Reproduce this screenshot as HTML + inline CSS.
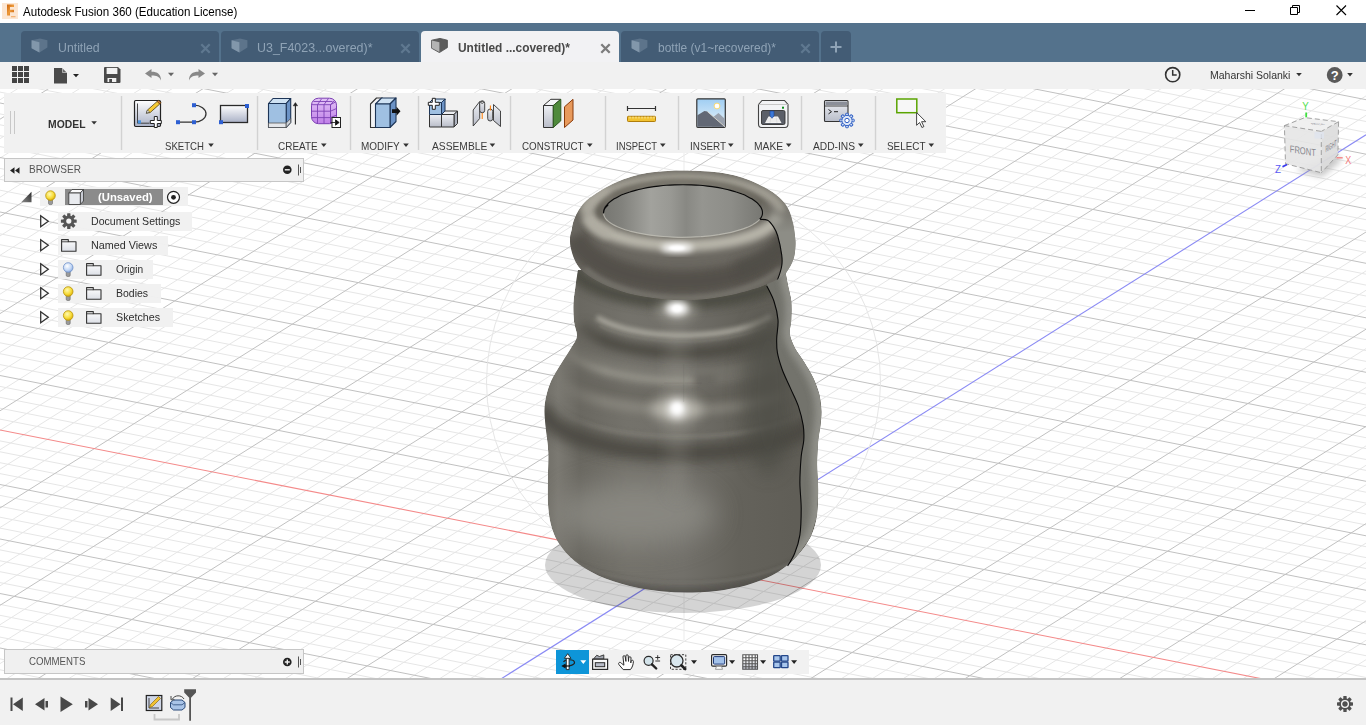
<!DOCTYPE html>
<html lang="en">
<head>
<meta charset="utf-8">
<title>Autodesk Fusion 360 (Education License)</title>
<style>
*{box-sizing:border-box;margin:0;padding:0}
html,body{width:1366px;height:725px;overflow:hidden;background:#fff;font-family:"Liberation Sans",Arial,sans-serif;}
.abs{position:absolute}
#titlebar{position:absolute;left:0;top:0;width:1366px;height:23px;background:#fff}
#titlebar .ttl{position:absolute;left:23.5px;top:5px;font-size:12.4px;color:#000;white-space:nowrap;transform:scaleX(0.936);transform-origin:0 0}
#tabstrip{position:absolute;left:0;top:23px;width:1366px;height:39px;background:#54728c}
.tab{position:absolute;top:8px;height:31px;width:198px;background:#435c75;border-radius:4px 4px 0 0;color:#8fa3b6;font-size:12.5px;white-space:nowrap}
.tab .lbl{position:absolute;left:36.500px;top:10px}
.tab.active{background:#f2f2f4;color:#484848;font-weight:bold}
.tab svg{position:absolute}
#qat{position:absolute;left:0;top:62px;width:1366px;height:27px;background:#f1f1f1}
#canvas{position:absolute;left:0;top:89px;width:1366px;height:590px;background:#fff;overflow:hidden}
#toolbar{position:absolute;left:4px;top:93px;width:942px;height:59.5px;background:#f1f1f1}
.tsep{position:absolute;top:3px;width:1px;height:54px;background:#d4d4d4}
.tlbl{position:absolute;top:47px;font-size:11px;color:#3a3a3a;white-space:nowrap;letter-spacing:0px}
.dd{display:inline-block;width:0;height:0;border-left:3px solid transparent;border-right:3px solid transparent;border-top:4px solid #333;vertical-align:middle;margin-left:3px;position:relative;top:-1px}
#browser{position:absolute;left:4px;top:157.5px;width:300px;height:24px;background:#f0f0f0;border:1px solid #c6c6c6}
.row{position:absolute;height:19px;background:rgba(241,241,241,0.97);font-size:11px;color:#2a2a2a;white-space:nowrap}
.row span{position:absolute;top:3px}
#comments{position:absolute;left:4px;top:648.5px;width:300px;height:25px;background:#f0f0f0;border:1px solid #c6c6c6}
#navbar{position:absolute;left:556px;top:650px;width:253px;height:24px;background:#f1f1f1}
#bottomline{position:absolute;left:0;top:678px;width:1366px;height:2px;background:#c4c4c4}
#timeline{position:absolute;left:0;top:680px;width:1366px;height:45px;background:#f1f1f1}
svg{display:block}
</style>
</head>
<body>
<div id="titlebar">
<svg class="abs" style="left:2px;top:3px" width="16" height="16" viewBox="0 0 16 16"><defs><linearGradient id="gF" x1="0" y1="0" x2="1" y2="1"><stop offset="0" stop-color="#c9620c"/><stop offset="0.500" stop-color="#ee9a3a"/><stop offset="1" stop-color="#c9620c"/></linearGradient></defs><rect width="16" height="16" fill="#fce6d2"/><path d="M5 1.500h7v2.600H8v2.700h4v2.400H8v3.200H5z" fill="url(#gF)"/><rect x="9" y="13" width="4.500" height="1.300" fill="#f0a860" opacity="0.800"/></svg>
<span style="position:absolute;left:22.9px;top:5.5px;font-size:12.4px;line-height:1;font-weight:normal;color:#000;white-space:nowrap;transform:scaleX(0.9343);transform-origin:0 0">Autodesk Fusion 360 (Education License)</span>

<svg class="abs" style="left:1240px;top:0" width="126" height="23" viewBox="1240 0 126 23"><path d="M1245 10.500h10" stroke="#000" stroke-width="1" fill="none"/><path d="M1290.500 7.500h7v7h-7zM1292.500 7.500v-2h7v7h-2" stroke="#000" stroke-width="1" fill="none"/><path d="M1336.500 5.500l9.500 9.500M1346 5.500l-9.500 9.500" stroke="#000" stroke-width="1.100" fill="none"/></svg>
</div>
<div id="tabstrip">
<div class="tab" style="left:21px"><svg style="left:10px;top:6.500px" width="17" height="15" viewBox="0 0 17 15"><path d="M0.600 2.200l8.400-1.800 7.400 1.800v7.400l-8 5-7.800-4.400z" fill="#5d748b"/><path d="M0.600 2.200l7.800 2v10.400l-7.800-4.400z" fill="#8297ab"/></svg><span style="position:absolute;left:36.6px;top:10.5px;font-size:12.5px;line-height:1;font-weight:normal;color:#8fa3b6;white-space:nowrap;transform:scaleX(0.9837);transform-origin:0 0">Untitled</span>
<svg style="left:178.500px;top:11.500px" width="11" height="11" viewBox="0 0 11 11"><path d="M1.300 1.300l8.400 8.400M9.700 1.300l-8.400 8.400" stroke="#5f7890" stroke-width="2.300" fill="none"/></svg></div>
<div class="tab" style="left:221px"><svg style="left:10px;top:6.500px" width="17" height="15" viewBox="0 0 17 15"><path d="M0.600 2.200l8.400-1.800 7.400 1.800v7.400l-8 5-7.800-4.400z" fill="#5d748b"/><path d="M0.600 2.200l7.800 2v10.400l-7.800-4.400z" fill="#8297ab"/></svg><span style="position:absolute;left:36px;top:10.5px;font-size:12.5px;line-height:1;font-weight:normal;color:#8fa3b6;white-space:nowrap;transform:scaleX(0.9953);transform-origin:0 0">U3_F4023...overed)*</span>
<svg style="left:178.500px;top:11.500px" width="11" height="11" viewBox="0 0 11 11"><path d="M1.300 1.300l8.400 8.400M9.700 1.300l-8.400 8.400" stroke="#5f7890" stroke-width="2.300" fill="none"/></svg></div>
<div class="tab active" style="left:421px"><svg style="left:10px;top:6.500px" width="17" height="15" viewBox="0 0 17 15"><path d="M0.600 2.200l8.400-1.800 7.400 1.800v7.400l-8 5-7.800-4.400z" fill="#5c5c5c" stroke="#4a4a4a" stroke-width="0.800" stroke-linejoin="round"/><path d="M0.900 2.500l7.500 1.800v9.800l-7.500-4.100z" fill="#b4b4b4"/></svg><span style="position:absolute;left:36.6px;top:10.5px;font-size:12.5px;line-height:1;font-weight:bold;color:#484848;white-space:nowrap;transform:scaleX(0.9532);transform-origin:0 0">Untitled ...covered)*</span>
<svg style="left:178.500px;top:11.500px" width="11" height="11" viewBox="0 0 11 11"><path d="M1.300 1.300l8.400 8.400M9.700 1.300l-8.400 8.400" stroke="#7c7c7c" stroke-width="2.300" fill="none"/></svg></div>
<div class="tab" style="left:621px"><svg style="left:10px;top:6.500px" width="17" height="15" viewBox="0 0 17 15"><path d="M0.600 2.200l8.400-1.800 7.400 1.800v7.400l-8 5-7.800-4.400z" fill="#5d748b"/><path d="M0.600 2.200l7.800 2v10.400l-7.800-4.400z" fill="#8297ab"/></svg><span style="position:absolute;left:36.5px;top:10.5px;font-size:12.5px;line-height:1;font-weight:normal;color:#8fa3b6;white-space:nowrap;transform:scaleX(0.9568);transform-origin:0 0">bottle (v1~recovered)*</span>
<svg style="left:178.500px;top:11.500px" width="11" height="11" viewBox="0 0 11 11"><path d="M1.300 1.300l8.400 8.400M9.700 1.300l-8.400 8.400" stroke="#5f7890" stroke-width="2.300" fill="none"/></svg></div>
<div class="tab" style="left:821px;width:30px"><svg style="left:9px;top:10px" width="12" height="12" viewBox="0 0 12 12"><path d="M6 0.500v11M0.500 6h11" stroke="#8fa3b6" stroke-width="2" fill="none"/></svg></div>
</div>
<div id="qat">
<svg class="abs" style="left:12px;top:4px" width="18" height="18" viewBox="0 0 18 18" fill="#444"><rect x="0" y="0" width="5" height="5"/><rect x="6" y="0" width="5" height="5"/><rect x="12" y="0" width="5" height="5"/><rect x="0" y="6" width="5" height="5"/><rect x="6" y="6" width="5" height="5"/><rect x="12" y="6" width="5" height="5"/><rect x="0" y="12" width="5" height="5"/><rect x="6" y="12" width="5" height="5"/><rect x="12" y="12" width="5" height="5"/></svg>
<svg class="abs" style="left:54px;top:5.500px" width="26" height="17" viewBox="0 0 26 17"><path d="M0 0h8l5 5v10.500H0z" fill="#4a4a4a"/><path d="M8.300 0v4.700H13z" fill="#f1f1f1"/><path d="M8.800 0.800v3.500h3.500z" fill="#6a6a6a"/><path d="M19 6h6l-3 3.300z" fill="#222"/></svg>
<svg class="abs" style="left:104px;top:5px" width="16.500" height="16" viewBox="0 0 16.500 16"><path d="M1 0h13l2.500 2.500V15a1 1 0 0 1-1 1H1a1 1 0 0 1-1-1V1a1 1 0 0 1 1-1z" fill="#4a4a4a"/><rect x="2.600" y="0.900" width="10.800" height="6.100" fill="#f1f1f1"/><rect x="3.500" y="11" width="8.800" height="4" fill="#f1f1f1"/><rect x="5.200" y="12" width="2.800" height="3" fill="#4a4a4a"/></svg>
<svg class="abs" style="left:145px;top:7px" width="31" height="12" viewBox="0 0 31 12"><path d="M0 4.500L6.500 0v2.800c6 0 9.500 2.500 9.500 8.700-1.500-3.700-4.500-4.900-9.500-4.900V9z" fill="#888"/><path d="M23 3.800h6l-3 3.400z" fill="#666"/></svg>
<svg class="abs" style="left:189px;top:7px" width="31" height="12" viewBox="0 0 31 12"><path d="M16 4.500L9.500 0v2.800c-6 0-9.500 2.500-9.500 8.700 1.500-3.700 4.500-4.900 9.500-4.900V9z" fill="#888"/><path d="M23 3.800h6l-3 3.400z" fill="#666"/></svg>
<svg class="abs" style="left:1164px;top:4px" width="18" height="18" viewBox="1164 66 18 18"><circle cx="1172.700" cy="74.700" r="7.100" fill="none" stroke="#333" stroke-width="1.600"/><path d="M1172.700 70v5h4" stroke="#333" stroke-width="1.500" fill="none"/></svg>
<span style="position:absolute;left:1210.2px;top:7.8px;font-size:11px;line-height:1;font-weight:normal;color:#333;white-space:nowrap;transform:scaleX(0.9529);transform-origin:0 0">Maharshi Solanki</span>

<svg class="abs" style="left:1295px;top:9px" width="8" height="6" viewBox="0 0 8 6"><path d="M1.200 1.900h5.600l-2.800 3.400z" fill="#333"/></svg>
<svg class="abs" style="left:1326px;top:4px" width="30" height="18" viewBox="1326 66 30 18"><circle cx="1334.700" cy="75" r="7.900" fill="#5a5a5a"/><text x="1334.700" y="79.600" font-size="13" font-weight="bold" fill="#fff" text-anchor="middle" font-family="Liberation Sans, sans-serif">?</text><path d="M1347.200 73h5.600l-2.800 3.400z" fill="#333"/></svg>
</div>
<div id="canvas">
<svg width="1366" height="590" viewBox="0 89 1366 590">
<g id="grid" shape-rendering="auto">
<path d="M1356.7 87L1366 88.8M1246.1 87L1366 110.6M1190.8 87L1366 121.5M1135.5 87L1366 132.4M1080.2 87L1366 143.3M969.6 87L1366 165.1M914.3 87L1366 176M859 87L1366 186.9M803.7 87L1366 197.8M20.3 87L0 99.8M693.1 87L1366 219.7M82.1 87L0 138.7M637.8 87L1366 230.6M113 87L0 158.1M582.5 87L1366 241.5M143.9 87L0 177.5M527.2 87L1366 252.4M174.8 87L0 197M416.6 87L1366 274.2M236.6 87L0 235.9M361.3 87L1366 285.1M267.5 87L0 255.3M306 87L1366 296M298.4 87L0 274.7M250.7 87L1366 306.9M329.4 87L0 294.2M140.2 87L1366 328.7M391.2 87L0 333.1M84.9 87L1366 339.6M422.1 87L0 352.5M29.6 87L1366 350.5M453 87L0 372M0 92.1L1366 361.4M483.9 87L0 391.4M0 113.9L1366 383.2M545.7 87L-0 430.3M0 124.8L1366 394.1M576.6 87L0 449.7M0 135.7L1366 405M607.5 87L0 469.2M0 146.6L1366 415.9M638.4 87L0 488.6M0 168.4L1366 437.7M700.2 87L0 527.5M0 179.3L1366 448.6M731.1 87L0 546.9M0 190.2L1366 459.5M762 87L0 566.4M0 201.1L1366 470.4M792.9 87L0 585.8M0 222.9L1366 492.2M854.8 87L0 624.7M0 233.8L1366 503.1M885.7 87L0 644.1M0 244.7L1366 514M916.6 87L0 663.6M0 255.6L1366 524.9M947.5 87L3.2 681M0 277.4L1366 546.7M1009.3 87L65 681M0 288.3L1366 557.6M1040.2 87L95.9 681M0 299.2L1366 568.5M1071.1 87L126.8 681M0 310.1L1366 579.4M1102 87L157.7 681M0 331.9L1366 601.2M1163.8 87L219.6 681M0 342.8L1366 612.1M1194.7 87L250.5 681M-0 353.7L1366 623M1225.6 87L281.4 681M-0 364.6L1366 633.9M1256.5 87L312.3 681M0 386.4L1366 655.7M1318.3 87L374.1 681M0 397.3L1366 666.6M1349.2 87L405 681M0 408.2L1366 677.5M1366 95.9L435.9 681M0 419.1L1328.4 681M1366 115.3L466.8 681M0 440.9L1217.8 681M1366 154.2L528.6 681M0 451.8L1162.5 681M1366 173.7L559.5 681M0 462.7L1107.2 681M1366 193.1L590.4 681M0 473.6L1051.9 681M1366 212.6L621.3 681M0 495.4L941.3 681M1366 251.4L683.1 681M0 506.3L886 681M1366 270.9L714.1 681M0 517.2L830.7 681M1366 290.3L745 681M0 528.1L775.4 681M1366 309.8L775.9 681M0 549.9L664.8 681M1366 348.6L837.7 681M0 560.8L609.6 681M1366 368.1L868.6 681M0 571.7L554.3 681M1366 387.5L899.5 681M0 582.6L499 681M1366 407L930.4 681M0 604.4L388.4 681M1366 445.9L992.2 681M0 615.3L333.1 681M1366 465.3L1023.1 681M0 626.2L277.8 681M1366 484.7L1054 681M0 637.1L222.5 681M1366 504.2L1084.9 681M0 658.9L111.9 681M1366 543.1L1146.7 681M0 669.8L56.6 681M1366 562.5L1177.6 681M0 680.7L1.3 681M1366 581.9L1208.5 681M1366 601.4L1239.4 681M1366 640.3L1301.3 681M1366 659.7L1332.2 681M1366 679.2L1363.1 681" stroke="#e6e6e6" stroke-width="1" fill="none"/>
<path d="M1301.4 87L1366 99.7M1024.9 87L1366 154.2M748.4 87L1366 208.7M51.2 87L0 119.2M471.9 87L1366 263.3M205.7 87L0 216.4M195.5 87L1366 317.8M360.3 87L0 313.6M0 103L1366 372.3M514.8 87L0 410.8M0 157.5L1366 426.8M669.3 87L0 508M0 212L1366 481.3M823.8 87L0 605.3M0 266.5L1366 535.8M978.4 87L34.1 681M-0 321L1366 590.3M1132.9 87L188.7 681M0 375.5L1366 644.8M1287.4 87L343.2 681M0 484.5L996.6 681M1366 232L652.2 681M0 539L720.1 681M1366 329.2L806.8 681M0 593.5L443.7 681M1366 426.4L961.3 681M0 648L167.2 681M1366 523.6L1115.8 681M1366 620.8L1270.4 681" stroke="#c1c1c1" stroke-width="1" fill="none"/>

<path d="M0 430L1273.1 681" stroke="#f48a8a" stroke-width="1.1" fill="none"/>

<path d="M1366 134.8L497.7 681" stroke="#8a8af4" stroke-width="1.1" fill="none"/>

</g>
<circle cx="683.500" cy="382" r="197" fill="none" stroke="#e6e6e6" stroke-width="1"/>
<path d="M684 150V640" stroke="#ebebeb" stroke-width="1"/>
<ellipse cx="683" cy="565" rx="138" ry="48" fill="rgba(0,0,0,0.17)"/>
<defs>
<clipPath id="cBody"><path d="M578 270C577.6 272.4 576.5 279.1 575.7 284.7C574.9 290.3 573.7 297.1 573.4 303.4C573.1 309.6 573.5 316.7 574.1 322.2C574.7 327.7 577.4 332 576.9 336.3C576.4 340.6 573.7 343.3 571 348C568.3 352.7 563.8 358.9 560.5 364.4C557.2 369.9 553.5 375.3 551.1 380.8C548.7 386.3 547 392.1 545.9 397.2C544.8 402.3 544.5 405.8 544.5 411.3C544.5 416.8 545.3 423.2 545.9 430C546.5 436.8 547.9 443.3 548.2 452C548.5 460.7 547.8 473 547.8 482.4C547.8 491.8 547.5 500.7 548.3 508.6C549 516.5 550.3 523.5 552.3 529.6C554.3 535.7 556.4 540.1 560.1 545.3C563.8 550.5 568.2 556 574.5 561C580.8 566 588.9 571.2 598.1 575.4C607.3 579.5 619.1 583.3 629.6 585.9C640.1 588.5 650.5 590.1 661 591.2C671.5 592.3 682 592.7 692.5 592.5C703 592.3 713.9 591.4 723.9 589.9C733.9 588.4 743.5 586.4 752.7 583.3C761.9 580.2 771.5 576.1 778.9 571.5C786.3 566.9 792 561.5 797.3 555.8C802.5 550.1 807.1 543.9 810.4 537.4C813.7 530.9 815.6 524.4 816.9 516.5C818.2 508.6 818.2 499 818.3 490.3C818.3 481.6 817.2 472.3 817.2 464.1C817.2 455.9 817.8 447.4 818.3 441C818.8 434.6 819.9 430.9 820.4 426C820.9 421.1 821.5 416.5 821.4 411.3C821.3 406.1 820.9 400.4 819.6 394.9C818.3 389.4 816.2 384 813.7 378.5C811.2 373 807.4 367.1 804.3 362C801.2 356.9 797.4 352.7 795 348C792.6 343.3 790.4 338.6 789.8 333.9C789.2 329.2 791.1 325.4 791.4 319.9C791.7 314.4 792 307 791.4 301.1C790.8 295.2 789 289.9 787.9 284.7C786.8 279.5 785.5 272.4 785 270Z"/></clipPath>
<clipPath id="cRim"><path d="M683.5 170.6C688.8 170.6 694 170.8 700 171.1C706 171.4 712.9 171.7 719.3 172.6C725.7 173.5 733 174.9 738.6 176.4C744.2 177.9 748.3 179.6 753.1 181.7C757.9 183.8 763.6 186.7 767.6 189C771.6 191.3 774.4 193.3 777.3 195.7C780.2 198.1 782.9 200.8 785 203.5C787.1 206.2 788.5 209 789.8 212.1C791.1 215.2 791.9 218.7 792.7 221.8C793.5 225 794 227.3 794.4 231C794.8 234.7 795.5 239.3 795.4 243.7C795.3 248.1 795.1 253 794 257.2C792.9 261.4 790.9 265.4 788.8 268.8C786.6 272.2 785.8 274.3 781.1 277.3C776.4 280.3 769.6 283.8 760.7 286.9C751.8 290 738.6 293.5 727.6 295.7C716.6 297.9 705.5 299.6 694.5 300.1C683.5 300.7 672.4 300.1 661.4 299C650.4 297.9 638.2 296.1 628.3 293.5C618.4 290.9 609.2 287.1 601.8 283.6C594.4 280.1 588.5 276.3 584.1 272.6C579.7 268.9 577.5 265.6 575.3 261.5C573.1 257.4 571.8 252.2 570.9 248.3C570 244.4 569.9 241.1 570 238C570.1 234.9 571.1 232.5 571.6 230C572.1 227.5 572.2 225.5 573 222.8C573.8 220.2 575 216.8 576.4 214.1C577.8 211.4 579.1 209 581.2 206.4C583.3 203.8 586.1 201 589 198.6C591.9 196.2 594.6 194.4 598.6 191.9C602.6 189.4 608.3 186 613.1 183.7C617.9 181.4 622 179.7 627.6 177.9C633.2 176.1 640.2 174.1 646.9 173C653.6 171.9 661.9 171.5 668 171.1C674.1 170.7 678.2 170.6 683.5 170.6Z"/></clipPath>
<clipPath id="cHole"><path d="M603.500 213A79.500 28.300 0 0 1 762.500 213A79.500 24.300 0 0 1 603.500 213Z"/></clipPath>
<clipPath id="cRight"><path d="M766.8 285.9C768 288.4 772 295.3 773.9 301C775.8 306.7 777.5 313.6 778 319.9C778.5 326.2 776.8 333.1 776.7 338.6C776.6 344.1 776.5 347.6 777.4 352.7C778.3 357.8 779.9 363.1 782 369C784.1 374.9 787.5 381.6 790.3 387.9C793 394.2 796.4 400.4 798.5 406.6C800.6 412.9 802.3 419.8 803.2 425.4C804.1 431 804.1 434.9 803.8 440C803.5 445.1 801.9 449.1 801.2 456.2C800.6 463.3 799.9 473.7 799.9 482.4C799.9 491.1 801.2 499.9 801.2 508.6C801.2 517.3 801 527.4 799.9 534.8C798.8 542.2 796.8 548 794.7 553.2C792.7 558.4 788.8 563.9 787.6 566L786 572L797.3 555.8L810.4 537.4L816.9 516.5L818.3 490.3L817.2 464.1L818.3 441L820.4 426L821.4 411.3L819.6 394.9L813.7 378.5L804.3 362L795 348L789.8 333.9L791.4 319.9L791.4 301.1L787.9 284.7L785 268L764 268Z"/></clipPath>
<filter id="b1" x="-50%" y="-50%" width="200%" height="200%"><feGaussianBlur stdDeviation="1"/></filter>
<filter id="b2" x="-50%" y="-50%" width="200%" height="200%"><feGaussianBlur stdDeviation="2"/></filter>
<filter id="b3" x="-50%" y="-50%" width="200%" height="200%"><feGaussianBlur stdDeviation="3"/></filter>
<filter id="b4" x="-50%" y="-50%" width="200%" height="200%"><feGaussianBlur stdDeviation="4.5"/></filter>
<filter id="b6" x="-50%" y="-50%" width="200%" height="200%"><feGaussianBlur stdDeviation="6"/></filter>
<filter id="b9" x="-50%" y="-50%" width="200%" height="200%"><feGaussianBlur stdDeviation="9"/></filter>
<filter id="b14" x="-50%" y="-50%" width="200%" height="200%"><feGaussianBlur stdDeviation="14"/></filter>
<linearGradient id="gBody" x1="544" y1="0" x2="822" y2="0" gradientUnits="userSpaceOnUse"><stop offset="0" stop-color="#706e67"/><stop offset="0.05" stop-color="#7b7972"/><stop offset="0.13" stop-color="#6a6861"/><stop offset="0.3" stop-color="#74726b"/><stop offset="0.5" stop-color="#72706a"/><stop offset="0.7" stop-color="#64625b"/><stop offset="0.9" stop-color="#605e57"/><stop offset="1" stop-color="#605e57"/></linearGradient>
<linearGradient id="gHole" x1="603" y1="0" x2="763" y2="0" gradientUnits="userSpaceOnUse"><stop offset="0" stop-color="#767671"/><stop offset="0.12" stop-color="#82827d"/><stop offset="0.3" stop-color="#a2a29d"/><stop offset="0.42" stop-color="#999994"/><stop offset="0.52" stop-color="#888883"/><stop offset="0.62" stop-color="#959590"/><stop offset="0.8" stop-color="#8d8d88"/><stop offset="1" stop-color="#777772"/></linearGradient>
<linearGradient id="gRR" x1="0" y1="200" x2="0" y2="232" gradientUnits="userSpaceOnUse"><stop offset="0" stop-color="#8d8d86" stop-opacity="0"/><stop offset="1" stop-color="#8d8d86" stop-opacity="1"/></linearGradient>
<linearGradient id="gMB" x1="556" y1="0" x2="800" y2="0" gradientUnits="userSpaceOnUse"><stop offset="0" stop-color="#fff" stop-opacity="0"/><stop offset="0.2" stop-color="#fff" stop-opacity="1"/><stop offset="0.75" stop-color="#fff" stop-opacity="1"/><stop offset="0.95" stop-color="#fff" stop-opacity="0.15"/></linearGradient><mask id="mBands" maskUnits="userSpaceOnUse" x="530" y="260" width="310" height="220"><rect x="530" y="260" width="310" height="220" fill="url(#gMB)"/></mask>
</defs>
<g clip-path="url(#cBody)">
<path d="M578 270C577.6 272.4 576.5 279.1 575.7 284.7C574.9 290.3 573.7 297.1 573.4 303.4C573.1 309.6 573.5 316.7 574.1 322.2C574.7 327.7 577.4 332 576.9 336.3C576.4 340.6 573.7 343.3 571 348C568.3 352.7 563.8 358.9 560.5 364.4C557.2 369.9 553.5 375.3 551.1 380.8C548.7 386.3 547 392.1 545.9 397.2C544.8 402.3 544.5 405.8 544.5 411.3C544.5 416.8 545.3 423.2 545.9 430C546.5 436.8 547.9 443.3 548.2 452C548.5 460.7 547.8 473 547.8 482.4C547.8 491.8 547.5 500.7 548.3 508.6C549 516.5 550.3 523.5 552.3 529.6C554.3 535.7 556.4 540.1 560.1 545.3C563.8 550.5 568.2 556 574.5 561C580.8 566 588.9 571.2 598.1 575.4C607.3 579.5 619.1 583.3 629.6 585.9C640.1 588.5 650.5 590.1 661 591.2C671.5 592.3 682 592.7 692.5 592.5C703 592.3 713.9 591.4 723.9 589.9C733.9 588.4 743.5 586.4 752.7 583.3C761.9 580.2 771.5 576.1 778.9 571.5C786.3 566.9 792 561.5 797.3 555.8C802.5 550.1 807.1 543.9 810.4 537.4C813.7 530.9 815.6 524.4 816.9 516.5C818.2 508.6 818.2 499 818.3 490.3C818.3 481.6 817.2 472.3 817.2 464.1C817.2 455.9 817.8 447.4 818.3 441C818.8 434.6 819.9 430.9 820.4 426C820.9 421.1 821.5 416.5 821.4 411.3C821.3 406.1 820.9 400.4 819.6 394.9C818.3 389.4 816.2 384 813.7 378.5C811.2 373 807.4 367.1 804.3 362C801.2 356.9 797.4 352.7 795 348C792.6 343.3 790.4 338.6 789.8 333.9C789.2 329.2 791.1 325.4 791.4 319.9C791.7 314.4 792 307 791.4 301.1C790.8 295.2 789 289.9 787.9 284.7C786.8 279.5 785.5 272.4 785 270Z" fill="url(#gBody)"/>
<path d="M571 262A112 40 0 0 0 795 262" fill="none" stroke="#4a4841" stroke-width="14" filter="url(#b4)" opacity="0.9"/>
<g mask="url(#mBands)">
<path d="M771.3 316.1C770.5 316.6 768.4 318 766.8 318.9C765.2 319.8 763.4 320.7 761.6 321.6C759.8 322.4 757.9 323.2 755.8 324C753.8 324.8 751.7 325.5 749.5 326.3C747.3 327 745 327.7 742.6 328.3C740.2 329 737.8 329.6 735.2 330.1C732.7 330.7 730.1 331.2 727.5 331.7C724.8 332.2 722.1 332.6 719.4 333C716.6 333.4 713.8 333.7 711 334C708.1 334.3 705.3 334.6 702.4 334.8C699.5 335 696.5 335.2 693.6 335.3C690.7 335.4 687.7 335.5 684.7 335.5C681.8 335.5 678.8 335.5 675.9 335.4C672.9 335.3 670 335.2 667.1 335C664.2 334.9 661.2 334.6 658.4 334.4C655.5 334.1 652.7 333.8 649.9 333.4C647.1 333.1 644.4 332.7 641.7 332.2C639 331.8 636.3 331.3 633.8 330.8C631.2 330.2 628.7 329.7 626.2 329.1C623.8 328.4 621.4 327.8 619.2 327.1C616.9 326.4 614.7 325.7 612.6 324.9C610.5 324.2 608.5 323.4 606.6 322.5C604.7 321.7 602.9 320.9 601.2 320C599.5 319.1 597.2 317.7 596.4 317.2" fill="none" stroke="#a8a69c" stroke-width="6" filter="url(#b2)" opacity="0.9"/>
<path d="M766.6 326.2C765.7 326.6 763.3 327.8 761.6 328.6C759.9 329.3 758.1 330.1 756.2 330.8C754.3 331.5 752.3 332.2 750.3 332.8C748.2 333.5 746.1 334.1 743.9 334.7C741.7 335.3 739.5 335.8 737.2 336.3C734.9 336.9 732.5 337.4 730.1 337.8C727.7 338.3 725.2 338.7 722.7 339.1C720.2 339.5 717.7 339.8 715.1 340.1C712.5 340.4 709.9 340.7 707.2 340.9C704.6 341.2 701.9 341.4 699.2 341.5C696.6 341.7 693.9 341.8 691.2 341.9C688.4 342 685.7 342 683 342C680.3 342 677.6 342 674.8 341.9C672.1 341.8 669.4 341.7 666.8 341.5C664.1 341.4 661.4 341.2 658.8 340.9C656.1 340.7 653.5 340.4 650.9 340.1C648.3 339.8 645.8 339.5 643.3 339.1C640.8 338.7 638.3 338.3 635.9 337.8C633.5 337.4 631.1 336.9 628.8 336.3C626.5 335.8 624.3 335.3 622.1 334.7C619.9 334.1 617.8 333.5 615.7 332.8C613.7 332.2 611.7 331.5 609.8 330.8C607.9 330.1 606.1 329.3 604.4 328.6C602.7 327.8 600.3 326.6 599.4 326.2" fill="none" stroke="#8f8d84" stroke-width="2" filter="url(#b1)" opacity="0.5"/>
<path d="M785.4 324.8C784.8 325.5 783.2 327.5 781.8 328.8C780.4 330.1 778.8 331.3 777 332.5C775.2 333.8 773.3 335 771.1 336.1C769 337.3 766.7 338.4 764.2 339.4C761.7 340.5 759.1 341.5 756.3 342.4C753.5 343.4 750.6 344.3 747.5 345.1C744.5 346 741.3 346.8 738 347.5C734.7 348.2 731.3 348.9 727.8 349.4C724.3 350 720.7 350.5 717.1 351C713.4 351.4 709.7 351.8 705.9 352.1C702.2 352.4 698.4 352.6 694.5 352.8C690.7 352.9 686.8 353 683 353C679.2 353 675.3 352.9 671.5 352.8C667.6 352.6 663.8 352.4 660.1 352.1C656.3 351.8 652.6 351.4 648.9 351C645.3 350.5 641.7 350 638.2 349.4C634.7 348.9 631.3 348.2 628 347.5C624.7 346.8 621.5 346 618.5 345.1C615.4 344.3 612.5 343.4 609.7 342.4C606.9 341.5 604.3 340.5 601.8 339.4C599.3 338.4 597 337.3 594.9 336.1C592.7 335 590.8 333.8 589 332.5C587.2 331.3 585.6 330.1 584.2 328.8C582.8 327.5 581.2 325.5 580.6 324.8" fill="none" stroke="#4b4942" stroke-width="13" filter="url(#b4)" opacity="0.9"/>
<path d="M693.9 380.3C692.5 380.4 688.1 380.5 685.3 380.5C682.4 380.5 679.5 380.5 676.6 380.4C673.8 380.4 670.9 380.3 668 380.2C665.2 380.1 662.3 379.9 659.5 379.7C656.7 379.5 653.9 379.3 651.1 379C648.3 378.7 645.5 378.4 642.8 378.1C640.1 377.8 637.4 377.4 634.7 377C632.1 376.6 629.5 376.2 626.9 375.7C624.3 375.2 621.8 374.8 619.3 374.2C616.8 373.7 614.4 373.1 612 372.5C609.7 372 607.4 371.3 605.1 370.7C602.9 370.1 600.7 369.4 598.6 368.7C596.4 368 594.4 367.3 592.4 366.5C590.4 365.7 588.5 365 586.7 364.2C584.8 363.4 583.1 362.6 581.4 361.7C579.7 360.9 578.1 360 576.6 359.1C575.1 358.2 573.7 357.3 572.3 356.4C571 355.5 569.7 354.6 568.6 353.6C567.4 352.7 566.4 351.7 565.4 350.7C564.4 349.8 563.5 348.8 562.7 347.8C562 346.8 561.3 345.8 560.7 344.8C560.1 343.7 559.6 342.7 559.2 341.7C558.8 340.7 558.5 339.6 558.3 338.6C558.1 337.6 558 336 558 335.5" fill="none" stroke="#96948b" stroke-width="9" filter="url(#b3)" opacity="0.85"/>
<path d="M796.3 354.5C796 354.8 795 355.5 794.3 356C793.6 356.5 792.9 357 792.2 357.4C791.4 357.9 790.6 358.4 789.9 358.8C789.1 359.3 788.3 359.8 787.4 360.2C786.6 360.7 785.7 361.1 784.9 361.6C784 362 783.1 362.5 782.2 362.9C781.2 363.3 780.3 363.8 779.3 364.2C778.4 364.6 777.4 365 776.4 365.4C775.4 365.8 774.3 366.2 773.3 366.6C772.2 367 771.2 367.4 770.1 367.8C769 368.2 767.9 368.5 766.8 368.9C765.7 369.3 764.5 369.6 763.3 370C762.2 370.3 761 370.7 759.8 371C758.6 371.3 757.4 371.7 756.2 372C755 372.3 753.7 372.6 752.4 372.9C751.2 373.2 749.9 373.5 748.6 373.8C747.3 374.1 746 374.4 744.7 374.6C743.4 374.9 742.1 375.2 740.7 375.4C739.4 375.7 738 375.9 736.6 376.1C735.3 376.4 733.9 376.6 732.5 376.8C731.1 377 729.7 377.2 728.3 377.4C726.9 377.6 725.5 377.8 724 378C722.6 378.2 721.2 378.4 719.7 378.5C718.3 378.7 716.1 378.9 715.4 379" fill="none" stroke="#8a8880" stroke-width="7" filter="url(#b4)" opacity="0.55"/>
<path d="M561 329A122 43 0 0 0 805 329" fill="none" stroke="#85837b" stroke-width="5" filter="url(#b3)" opacity="0.5"/>
<path d="M548 352A135 45 0 0 0 818 352" fill="none" stroke="#5e5c55" stroke-width="9" filter="url(#b4)" opacity="0.45"/>
<path d="M545 364A138 46 0 0 0 821 364" fill="none" stroke="#9c9a90" stroke-width="9" filter="url(#b4)" opacity="0.55"/>
<path d="M544 391A139 46 0 0 0 822 391" fill="none" stroke="#8b8981" stroke-width="3.5" filter="url(#b2)" opacity="0.7"/>
</g>
<path d="M543 406A140 47 0 0 0 823 406" fill="none" stroke="#4b4943" stroke-width="18" filter="url(#b6)" opacity="0.95"/>
<ellipse cx="636" cy="514" rx="80" ry="32" fill="#908f88" filter="url(#b14)" opacity="0.75"/>
<path d="M542 546A141 52 0 0 0 824 546" fill="none" stroke="#454340" stroke-width="16" filter="url(#b6)" opacity="0.95"/>
<path d="M549 533A134 50 0 0 0 817 533" fill="none" stroke="#7b7972" stroke-width="2" filter="url(#b1)" opacity="0.5"/>
<ellipse cx="768" cy="395" rx="26" ry="80" fill="#4a4842" filter="url(#b9)" opacity="0.6"/>
<ellipse cx="677" cy="400" rx="10" ry="100" fill="#b0aea4" filter="url(#b9)" opacity="0.25"/>
<ellipse cx="677" cy="309" rx="20" ry="8" fill="#d8d6cc" filter="url(#b6)" opacity="0.55"/>
<ellipse cx="677" cy="308.5" rx="11" ry="7" fill="#ffffff" filter="url(#b3)" opacity="0.95"/>
<ellipse cx="677" cy="308.5" rx="5" ry="3.5" fill="#ffffff" filter="url(#b1)" opacity="1"/>
<ellipse cx="677" cy="409" rx="26" ry="13" fill="#d8d6cc" filter="url(#b6)" opacity="0.6"/>
<ellipse cx="677" cy="409" rx="9" ry="9" fill="#ffffff" filter="url(#b4)" opacity="0.95"/>
<ellipse cx="677" cy="408" rx="5" ry="5" fill="#ffffff" filter="url(#b2)" opacity="1"/>
<path d="M683.600 364v38M664 383h38" stroke="#4a4842" stroke-width="0.800" opacity="0.100"/>
<g clip-path="url(#cRight)"><path d="M766.8 285.9C768 288.4 772 295.3 773.9 301C775.8 306.7 777.5 313.6 778 319.9C778.5 326.2 776.8 333.1 776.7 338.6C776.6 344.1 776.5 347.6 777.4 352.7C778.3 357.8 779.9 363.1 782 369C784.1 374.9 787.5 381.6 790.3 387.9C793 394.2 796.4 400.4 798.5 406.6C800.6 412.9 802.3 419.8 803.2 425.4C804.1 431 804.1 434.9 803.8 440C803.5 445.1 801.9 449.1 801.2 456.2C800.6 463.3 799.9 473.7 799.9 482.4C799.9 491.1 801.2 499.9 801.2 508.6C801.2 517.3 801 527.4 799.9 534.8C798.8 542.2 796.8 548 794.7 553.2C792.7 558.4 788.8 563.9 787.6 566L786 572L797.3 555.8L810.4 537.4L816.9 516.5L818.3 490.3L817.2 464.1L818.3 441L820.4 426L821.4 411.3L819.6 394.9L813.7 378.5L804.3 362L795 348L789.8 333.9L791.4 319.9L791.4 301.1L787.9 284.7L785 268L764 268Z" fill="#73736c"/>
<path d="M785 268C785.5 270.8 786.8 279.2 787.9 284.7C789 290.2 790.8 295.2 791.4 301.1C792 307 791.7 314.4 791.4 319.9C791.1 325.4 789.2 329.2 789.8 333.9C790.4 338.6 792.6 343.3 795 348C797.4 352.7 801.2 356.9 804.3 362C807.4 367.1 811.2 373 813.7 378.5C816.2 384 818.3 389.4 819.6 394.9C820.9 400.4 821.3 406.1 821.4 411.3C821.5 416.5 820.9 421.1 820.4 426C819.9 430.9 818.8 434.6 818.3 441C817.8 447.4 817.2 455.9 817.2 464.1C817.2 472.3 818.3 481.6 818.3 490.3C818.2 499 818.2 508.6 816.9 516.5C815.6 524.4 813.7 530.9 810.4 537.4C807.1 543.9 801.4 550 797.3 555.8C793.2 561.6 787.9 569.3 786 572" fill="none" stroke="#93938c" stroke-width="13" filter="url(#b3)" opacity="0.9"/></g>
</g>
<path d="M766.8 285.9C768 288.4 772 295.3 773.9 301C775.8 306.7 777.5 313.6 778 319.9C778.5 326.2 776.8 333.1 776.7 338.6C776.6 344.1 776.5 347.6 777.4 352.7C778.3 357.8 779.9 363.1 782 369C784.1 374.9 787.5 381.6 790.3 387.9C793 394.2 796.4 400.4 798.5 406.6C800.6 412.9 802.3 419.8 803.2 425.4C804.1 431 804.1 434.9 803.8 440C803.5 445.1 801.9 449.1 801.2 456.2C800.6 463.3 799.9 473.7 799.9 482.4C799.9 491.1 801.2 499.9 801.2 508.6C801.2 517.3 801 527.4 799.9 534.8C798.8 542.2 796.8 548 794.7 553.2C792.7 558.4 788.8 563.9 787.6 566" fill="none" stroke="#0a0a0a" stroke-width="1.1"/>
<g clip-path="url(#cRim)">
<path d="M683.5 170.6C688.8 170.6 694 170.8 700 171.1C706 171.4 712.9 171.7 719.3 172.6C725.7 173.5 733 174.9 738.6 176.4C744.2 177.9 748.3 179.6 753.1 181.7C757.9 183.8 763.6 186.7 767.6 189C771.6 191.3 774.4 193.3 777.3 195.7C780.2 198.1 782.9 200.8 785 203.5C787.1 206.2 788.5 209 789.8 212.1C791.1 215.2 791.9 218.7 792.7 221.8C793.5 225 794 227.3 794.4 231C794.8 234.7 795.5 239.3 795.4 243.7C795.3 248.1 795.1 253 794 257.2C792.9 261.4 790.9 265.4 788.8 268.8C786.6 272.2 785.8 274.3 781.1 277.3C776.4 280.3 769.6 283.8 760.7 286.9C751.8 290 738.6 293.5 727.6 295.7C716.6 297.9 705.5 299.6 694.5 300.1C683.5 300.7 672.4 300.1 661.4 299C650.4 297.9 638.2 296.1 628.3 293.5C618.4 290.9 609.2 287.1 601.8 283.6C594.4 280.1 588.5 276.3 584.1 272.6C579.7 268.9 577.5 265.6 575.3 261.5C573.1 257.4 571.8 252.2 570.9 248.3C570 244.4 569.9 241.1 570 238C570.1 234.9 571.1 232.5 571.6 230C572.1 227.5 572.2 225.5 573 222.8C573.8 220.2 575 216.8 576.4 214.1C577.8 211.4 579.1 209 581.2 206.4C583.3 203.8 586.1 201 589 198.6C591.9 196.2 594.6 194.4 598.6 191.9C602.6 189.4 608.3 186 613.1 183.7C617.9 181.4 622 179.7 627.6 177.9C633.2 176.1 640.2 174.1 646.9 173C653.6 171.9 661.9 171.5 668 171.1C674.1 170.7 678.2 170.6 683.5 170.6Z" fill="#6c6962"/>
<path d="M585 213C585.1 212.2 585.3 209.9 585.8 208.4C586.4 206.9 587.2 205.4 588.3 203.9C589.4 202.5 590.8 201 592.5 199.6C594.1 198.2 596 196.8 598.1 195.5C600.3 194.2 602.7 192.9 605.3 191.7C607.8 190.5 610.7 189.3 613.7 188.3C616.7 187.2 620 186.2 623.3 185.2C626.7 184.3 630.3 183.5 634 182.7C637.7 181.9 641.6 181.2 645.5 180.7C649.4 180.1 653.5 179.6 657.6 179.2C661.8 178.8 666 178.5 670.2 178.3C674.4 178.1 678.7 178 683 178C687.3 178 691.6 178.1 695.8 178.3C700 178.5 704.2 178.8 708.4 179.2C712.5 179.6 716.6 180.1 720.5 180.7C724.4 181.2 728.3 181.9 732 182.7C735.7 183.5 739.3 184.3 742.7 185.2C746 186.2 749.3 187.2 752.3 188.3C755.3 189.3 758.2 190.5 760.7 191.7C763.3 192.9 765.7 194.2 767.9 195.5C770 196.8 771.9 198.2 773.5 199.6C775.2 201 776.6 202.5 777.7 203.9C778.8 205.4 779.6 206.9 780.2 208.4C780.7 209.9 780.9 212.2 781 213" fill="none" stroke="#aaa79c" stroke-width="10" filter="url(#b3)" opacity="0.9"/>
<path d="M791.3 235.7C790.8 236.8 789.6 240 788.4 242.1C787.2 244.1 785.7 246.2 784 248.2C782.3 250.2 780.4 252.1 778.3 254C776.1 255.9 773.8 257.7 771.2 259.4C768.7 261.2 765.9 262.9 763 264.4C760.1 266 757 267.5 753.7 268.9C750.4 270.3 747 271.6 743.4 272.8C739.9 274 736.2 275.1 732.4 276C728.6 277 724.6 277.9 720.6 278.6C716.6 279.4 712.5 280 708.4 280.5C704.2 281 700 281.4 695.8 281.6C691.5 281.9 687.3 282 683 282C678.7 282 674.5 281.9 670.2 281.6C666 281.4 661.8 281 657.6 280.5C653.5 280 649.4 279.4 645.4 278.6C641.4 277.9 637.4 277 633.6 276C629.8 275.1 626.1 274 622.6 272.8C619 271.6 615.6 270.3 612.3 268.9C609 267.5 605.9 266 603 264.4C600.1 262.9 597.3 261.2 594.8 259.4C592.2 257.7 589.9 255.9 587.7 254C585.6 252.1 583.7 250.2 582 248.2C580.3 246.2 578.8 244.1 577.6 242.1C576.4 240 575.2 236.8 574.7 235.7" fill="none" stroke="#524f49" stroke-width="24" filter="url(#b4)" opacity="0.95"/>
<path d="M785.4 238.9C785.2 239.2 784.8 240 784.4 240.5C784.1 241 783.7 241.6 783.4 242.1C783 242.6 782.6 243.1 782.2 243.6C781.8 244.1 781.4 244.6 780.9 245.1C780.5 245.6 780 246.1 779.6 246.6C779.1 247.1 778.6 247.6 778.1 248.1C777.6 248.6 777 249.1 776.5 249.6C775.9 250.1 775.4 250.5 774.8 251C774.2 251.5 773.6 251.9 773 252.4C772.4 252.9 771.8 253.3 771.1 253.8C770.5 254.2 769.8 254.7 769.2 255.1C768.5 255.6 767.8 256 767.1 256.4C766.4 256.9 765.7 257.3 764.9 257.7C764.2 258.1 763.5 258.6 762.7 259C761.9 259.4 761.2 259.8 760.4 260.2C759.6 260.6 758.8 261 758 261.4C757.1 261.7 756.3 262.1 755.5 262.5C754.6 262.9 753.8 263.2 752.9 263.6C752 264 751.1 264.3 750.2 264.7C749.4 265 748.4 265.3 747.5 265.7C746.6 266 745.7 266.3 744.7 266.6C743.8 267 742.9 267.3 741.9 267.6C740.9 267.9 740 268.2 739 268.5C738 268.7 736.5 269.2 736 269.3" fill="none" stroke="#504d47" stroke-width="16" filter="url(#b4)" opacity="0.7"/>
<path d="M777.6 215.8C777.3 216.5 776.7 218.5 775.9 219.8C775.1 221.1 774 222.4 772.7 223.7C771.5 224.9 769.9 226.2 768.2 227.4C766.5 228.6 764.5 229.7 762.4 230.9C760.2 232 757.9 233.1 755.3 234.1C752.8 235.1 750.1 236.1 747.2 237C744.3 237.9 741.2 238.7 738.1 239.5C734.9 240.3 731.5 241 728.1 241.6C724.6 242.2 721.1 242.8 717.4 243.3C713.8 243.8 710 244.2 706.3 244.5C702.5 244.8 698.6 245.1 694.7 245.3C690.8 245.4 686.9 245.5 683 245.5C679.1 245.5 675.2 245.4 671.3 245.3C667.4 245.1 663.5 244.8 659.7 244.5C656 244.2 652.2 243.8 648.6 243.3C644.9 242.8 641.4 242.2 637.9 241.6C634.5 241 631.1 240.3 627.9 239.5C624.8 238.7 621.7 237.9 618.8 237C615.9 236.1 613.2 235.1 610.7 234.1C608.1 233.1 605.8 232 603.6 230.9C601.5 229.7 599.5 228.6 597.8 227.4C596.1 226.2 594.5 224.9 593.3 223.7C592 222.4 590.9 221.1 590.1 219.8C589.3 218.5 588.7 216.5 588.4 215.8" fill="none" stroke="#bcb9ae" stroke-width="12" filter="url(#b3)" opacity="0.95"/>
<path d="M610.2 234.9C609.7 234.6 607.9 233.8 606.8 233.3C605.7 232.8 604.6 232.2 603.6 231.7C602.6 231.1 601.6 230.6 600.7 230C599.8 229.4 598.9 228.8 598.1 228.3C597.3 227.7 596.5 227.1 595.8 226.5C595 225.9 594.4 225.2 593.7 224.6C593.1 224 592.5 223.4 592 222.8C591.5 222.1 591 221.5 590.6 220.8C590.1 220.2 589.8 219.6 589.4 218.9C589.1 218.3 588.9 217.6 588.6 216.9C588.4 216.3 588.3 215.6 588.2 215C588.1 214.3 588 213.7 588 213C588 212.3 588.1 211.7 588.2 211C588.3 210.4 588.4 209.7 588.6 209.1C588.9 208.4 589.1 207.7 589.4 207.1C589.8 206.4 590.1 205.8 590.6 205.2C591 204.5 591.5 203.9 592 203.2C592.5 202.6 593.1 202 593.7 201.4C594.4 200.8 595 200.1 595.8 199.5C596.5 198.9 597.3 198.3 598.1 197.7C598.9 197.2 599.8 196.6 600.7 196C601.6 195.4 602.6 194.9 603.6 194.3C604.6 193.8 605.7 193.2 606.8 192.7C607.9 192.2 609.7 191.4 610.2 191.1" fill="none" stroke="#aeaba0" stroke-width="11" filter="url(#b3)" opacity="0.85"/>
<path d="M600.3 218C600.1 217.2 599.2 214.9 599 213.4C598.9 211.9 599.1 210.4 599.6 208.8C600 207.3 600.8 205.8 601.9 204.3C602.9 202.9 604.3 201.4 605.9 200C607.5 198.6 609.4 197.3 611.5 196C613.6 194.7 616 193.4 618.7 192.3C621.3 191.1 624.1 190 627.2 189C630.2 188 633.5 187 636.8 186.2C640.2 185.3 643.8 184.6 647.5 184C651.2 183.3 655 182.8 658.9 182.3C662.8 181.9 666.8 181.6 670.8 181.3C674.8 181.1 678.9 181 683 181C687.1 181 691.2 181.1 695.2 181.3C699.2 181.6 703.2 181.9 707.1 182.3C711 182.8 714.8 183.3 718.5 184C722.2 184.6 725.8 185.3 729.2 186.2C732.5 187 735.8 188 738.8 189C741.9 190 744.7 191.1 747.3 192.3C750 193.4 752.4 194.7 754.5 196C756.6 197.3 758.5 198.6 760.1 200C761.7 201.4 763.1 202.9 764.1 204.3C765.2 205.8 766 207.3 766.4 208.8C766.9 210.4 767.1 211.9 767 213.4C766.8 214.9 765.9 217.2 765.7 218" fill="none" stroke="#625e55" stroke-width="4.5" filter="url(#b2)" opacity="0.7"/>
<path d="M780.9 268C780 268.7 777.4 271 775.6 272.4C773.7 273.8 771.7 275.2 769.6 276.6C767.5 277.9 765.2 279.2 762.9 280.4C760.6 281.7 758.1 282.8 755.6 284C753.1 285.1 750.5 286.1 747.8 287.1C745.1 288.1 742.3 289.1 739.5 290C736.7 290.8 733.7 291.6 730.8 292.4C727.8 293.1 724.7 293.8 721.6 294.4C718.6 295 715.4 295.5 712.2 296C709.1 296.4 705.9 296.8 702.6 297.1C699.4 297.4 696.1 297.6 692.8 297.8C689.6 297.9 686.3 298 683 298C679.7 298 676.4 297.9 673.2 297.8C669.9 297.6 666.6 297.4 663.4 297.1C660.1 296.8 656.9 296.4 653.8 296C650.6 295.5 647.4 295 644.4 294.4C641.3 293.8 638.2 293.1 635.2 292.4C632.3 291.6 629.3 290.8 626.5 290C623.7 289.1 620.9 288.1 618.2 287.1C615.5 286.1 612.9 285.1 610.4 284C607.9 282.8 605.4 281.7 603.1 280.4C600.8 279.2 598.5 277.9 596.4 276.6C594.3 275.2 592.3 273.8 590.4 272.4C588.6 271 586 268.7 585.1 268" fill="none" stroke="#84827a" stroke-width="4" filter="url(#b2)" opacity="0.6"/>
<ellipse cx="677" cy="248" rx="16" ry="4.5" fill="#ffffff" filter="url(#b3)" opacity="1"/>
<ellipse cx="677" cy="248" rx="8" ry="2.5" fill="#ffffff" filter="url(#b1)" opacity="1"/>
<path d="M759.8 219.3C761.1 219.5 765.3 219 767.6 220.2C769.9 221.4 771.7 224 773.4 226.6C775.1 229.2 776.2 230.8 777.6 235.5C779 240.2 781 249.8 781.7 254.9C782.4 260 782.4 261.8 781.7 266C781 270.2 778.9 276.3 777.3 280.3C775.7 284.3 772.9 288.4 772 290L790 295L800 250L800 190L763 190Z" fill="url(#gRR)"/>
<path d="M759.8 219.3C761.1 219.5 765.3 219 767.6 220.2C769.9 221.4 771.7 224 773.4 226.6C775.1 229.2 776.2 230.8 777.6 235.5C779 240.2 781 249.8 781.7 254.9C782.4 260 782.4 261.8 781.7 266C781 270.2 778.9 276.3 777.3 280.3C775.7 284.3 772.9 288.4 772 290" fill="none" stroke="#0a0a0a" stroke-width="1.100"/>
</g>
<g clip-path="url(#cHole)"><rect x="600" y="180" width="170" height="62" fill="url(#gHole)"/></g>
<path d="M759.8 219.3C759.3 219.8 758 221.2 756.8 222.1C755.6 223 754.2 223.8 752.7 224.7C751.2 225.5 749.5 226.4 747.6 227.2C745.8 227.9 743.8 228.7 741.6 229.4C739.5 230.1 737.2 230.8 734.8 231.4C732.4 232.1 729.8 232.7 727.2 233.2C724.5 233.7 721.8 234.2 718.9 234.7C716.1 235.1 713.2 235.5 710.2 235.8C707.2 236.2 704.1 236.4 701.1 236.7C698 236.9 694.8 237.1 691.7 237.2C688.5 237.3 685.3 237.3 682.1 237.3C679 237.3 675.8 237.2 672.6 237.1C669.5 237 666.3 236.8 663.3 236.5C660.2 236.3 657.1 236 654.2 235.6C651.2 235.3 648.3 234.9 645.5 234.4C642.7 234 640 233.5 637.4 232.9C634.8 232.3 632.3 231.7 629.9 231.1C627.6 230.4 625.3 229.8 623.2 229C621.1 228.3 619.2 227.5 617.4 226.7C615.6 225.9 613.9 225.1 612.5 224.2C611 223.4 609.7 222.5 608.6 221.6C607.5 220.7 606.5 219.7 605.8 218.8C605 217.8 604.5 216.9 604.1 215.9C603.7 214.9 603.6 213.5 603.5 213" fill="none" stroke="#c6c4bb" stroke-width="1.200" opacity="0.75"/>
<path d="M608.3 204.7C607.7 205.4 605.5 207.4 604.7 208.8C603.9 210.2 603.6 212.8 603.5 213C603.4 213.2 603.6 211 603.9 210C604.2 209.1 604.7 208.1 605.2 207.1C605.8 206.2 606.5 205.2 607.4 204.3C608.2 203.3 609.2 202.4 610.4 201.5C611.5 200.6 612.8 199.7 614.2 198.8C615.5 198 617.1 197.2 618.7 196.4C620.3 195.6 622.1 194.8 623.9 194.1C625.8 193.3 627.7 192.6 629.8 192C631.9 191.3 634 190.7 636.3 190.1C638.5 189.5 640.9 189 643.2 188.5C645.6 188 648.1 187.5 650.7 187.1C653.2 186.7 655.8 186.4 658.4 186.1C661.1 185.8 663.8 185.5 666.5 185.3C669.2 185.1 671.9 185 674.7 184.9C677.4 184.8 680.2 184.7 683 184.7C685.8 184.7 688.6 184.8 691.3 184.9C694.1 185 696.8 185.1 699.5 185.3C702.2 185.5 704.9 185.8 707.6 186.1C710.2 186.4 712.8 186.7 715.3 187.1C717.9 187.5 720.4 188 722.8 188.5C725.1 189 727.5 189.5 729.7 190.1C732 190.7 734.1 191.3 736.2 192C738.3 192.6 740.2 193.3 742.1 194.1C743.9 194.8 745.7 195.6 747.3 196.4C748.9 197.2 750.5 198 751.8 198.8C753.2 199.7 754.5 200.6 755.6 201.5C756.8 202.4 757.8 203.3 758.6 204.3C759.5 205.2 760.2 206.2 760.8 207.1C761.3 208.1 761.8 209.1 762.1 210C762.4 211 762.5 212.2 762.5 213C762.5 213.8 762.4 214.4 762.2 215.1C762 215.8 761.7 216.5 761.3 217.2C760.9 217.9 760 218.9 759.8 219.3" fill="none" stroke="#0a0a0a" stroke-width="1.100"/>
</svg>
</div>
<svg class="abs" style="left:1266px;top:95px" width="100" height="90" viewBox="1266 95 100 90">
<defs><filter id="vcb" x="-50%" y="-50%" width="200%" height="200%"><feGaussianBlur stdDeviation="3"/></filter></defs>
<path d="M1296 170l26 7 20-17-8-6z" fill="#9a9a9a" opacity="0.550" filter="url(#vcb)"/>
<path d="M1284.400 125.600l20.400-8 33.800 4.100-17.300 9.700z" fill="#efefef" fill-opacity="0.920"/>
<path d="M1321.300 131.400l17.300-9.700-0.700 33.100-16.600 17.900z" fill="#dcdcdc" fill-opacity="0.920"/>
<path d="M1284.400 125.600l36.900 5.800v41.300l-35.800-8.900z" fill="#e6e6e6" fill-opacity="0.920"/>
<g fill="none" stroke="#999" stroke-width="0.900" stroke-dasharray="5 3">
<path d="M1284.400 125.600l36.900 5.800v41.300l-35.800-8.900z"/>
<path d="M1284.400 125.600l20.400-8 33.800 4.100-17.300 9.700"/>
<path d="M1338.600 121.700l-0.700 33.100-16.600 17.900"/>
</g>
<rect x="1314.500" y="132" width="9.500" height="6.500" fill="#dfe3ee" opacity="0.800"/>
<text transform="matrix(1 0.157 0 1 1289.800 152.200)" font-family="Liberation Sans, sans-serif" font-size="10" fill="#85858c" textLength="26" lengthAdjust="spacingAndGlyphs">FRONT</text>
<text transform="matrix(0.700 -0.420 0 1 1325.500 152.500)" font-family="Liberation Sans, sans-serif" font-size="9" fill="#77777e" textLength="16" lengthAdjust="spacingAndGlyphs">RIGHT</text>
<text transform="matrix(-0.900 -0.110 -0.500 0.200 1322 125.500)" font-family="Liberation Sans, sans-serif" font-size="9" fill="#8a8a90" textLength="15" lengthAdjust="spacingAndGlyphs">TOP</text>
<path d="M1306.200 112.500v4.800" stroke="#3fe03f" stroke-width="1.800"/>
<path d="M1336.500 157.800h6.200" stroke="#f47a7a" stroke-width="1.300"/>
<path d="M1287 164.500l-4.500 2.300" stroke="#3a3af0" stroke-width="1.800"/>
<text x="1302.300" y="110.200" font-family="Liberation Sans, sans-serif" font-size="10.500" fill="#4fe04f" textLength="6.500" lengthAdjust="spacingAndGlyphs">Y</text>
<text x="1345.300" y="163.800" font-family="Liberation Sans, sans-serif" font-size="10.500" fill="#f47a7a" textLength="6" lengthAdjust="spacingAndGlyphs">X</text>
<text x="1275" y="172.800" font-family="Liberation Sans, sans-serif" font-size="10.500" fill="#5a5af4" textLength="6" lengthAdjust="spacingAndGlyphs">Z</text>
</svg>
<div id="toolbar">
<svg class="abs" style="left:0;top:0" width="942" height="60" viewBox="4 93 942 60">
<defs>
<linearGradient id="gSk" x1="0" y1="0" x2="0" y2="1"><stop offset="0" stop-color="#ffffff"/><stop offset="1" stop-color="#aab1c6"/></linearGradient>
<linearGradient id="gPen" x1="0" y1="0" x2="1" y2="1"><stop offset="0" stop-color="#ffe36a"/><stop offset="1" stop-color="#f0b400"/></linearGradient>
<linearGradient id="gGrey" x1="0" y1="0" x2="0" y2="1"><stop offset="0" stop-color="#eef0f4"/><stop offset="1" stop-color="#b9bdc9"/></linearGradient>
<linearGradient id="gSky" x1="0" y1="0" x2="0" y2="1"><stop offset="0" stop-color="#9fcdf2"/><stop offset="1" stop-color="#eaf5fb"/></linearGradient>
<linearGradient id="gPur" x1="0" y1="0" x2="0" y2="1"><stop offset="0" stop-color="#e3c4f7"/><stop offset="1" stop-color="#c07fe8"/></linearGradient>
</defs>
<!-- grip -->
<path d="M10.500 111v23M14.500 111v23" stroke="#c8c8c8" stroke-width="1" fill="none"/>
<!-- separators -->
<path d="M121.500 96v54M257.500 96v54M350.500 96v54M418.500 96v54M510.500 96v54M605.500 96v54M678.500 96v54M743.500 96v54M801.500 96v54M875.500 96v54" stroke="#d2d2d2" stroke-width="1.400" fill="none"/>
<!-- SKETCH: create sketch -->
<g>
<rect x="134.500" y="100.500" width="26" height="26" rx="1.200" fill="url(#gSk)" stroke="#222" stroke-width="1.200"/>
<path d="M137.500 103.500v19.700h12" stroke="#333" stroke-width="0.900" fill="none"/>
<rect x="137.800" y="120.300" width="3.200" height="3.200" fill="#4b95e0"/>
<path d="M146.300 113.200l1.200-3.200 9.700-8.600 2.600 2.600-9.700 8.600z" fill="url(#gPen)" stroke="#3a2a00" stroke-width="0.700"/>
<path d="M157.200 101.400l1.300-1.100 2.500 2.500-1.200 1.200z" fill="#d9853b" stroke="#5a3000" stroke-width="0.600"/>
<path d="M146.300 113.200l1.200-3.200 2.100 2z" fill="#fff" stroke="#333" stroke-width="0.600"/>
<path d="M154.300 116.500h3v4h4v3h-4v4h-3v-4h-4v-3h4z" fill="#fff" stroke="#222" stroke-width="1"/>
</g>
<!-- SKETCH: line/arc -->
<g>
<path d="M178 122.200h16a12 8.500 0 0 0 0-17" stroke="#333" stroke-width="1.300" fill="none" transform="translate(0 0)"/>
<path d="M194 122.200c16 0 16-17 0-17" stroke="#f1f1f1" stroke-width="0" fill="none"/>
<rect x="192" y="103.200" width="4" height="4" fill="#2d5fd2"/>
<rect x="176" y="120.200" width="4" height="4" fill="#2d5fd2"/>
<rect x="192" y="120.200" width="4" height="4" fill="#2d5fd2"/>
</g>
<!-- SKETCH: rectangle -->
<g>
<rect x="220.500" y="105.500" width="27" height="17" fill="url(#gSk)" stroke="#2a2a2a" stroke-width="1.300"/>
<rect x="245" y="104" width="4" height="4" fill="#2d5fd2"/>
<rect x="219" y="120.200" width="4" height="4" fill="#2d5fd2"/>
</g>
<!-- CREATE: extrude -->
<g stroke="#1d3557" stroke-width="1.100" stroke-linejoin="round">
<path d="M268.500 103.500l4.500-5h17.700l-4.500 5z" fill="#cfe2f3"/>
<path d="M286.200 103.500l4.500-5v24l-4.500 5z" fill="#6c93c6"/>
<rect x="268.500" y="103.500" width="17.700" height="24" fill="#9fc0e2"/>
<path d="M268.500 123h17.700v4.500h-17.700z" fill="#e4e6ea" stroke="#555" stroke-width="0.800"/>
<path d="M286.200 123l4.500-4.500v4l-4.500 5z" fill="#cfd3da" stroke="#555" stroke-width="0.800"/>
</g>
<path d="M295.400 104v20.500" stroke="#222" stroke-width="1.100" fill="none"/><path d="M293.200 105.800l2.200-3.200 2.200 3.200z" fill="#222" stroke="#222" stroke-width="0.500"/>
<!-- CREATE: form -->
<g>
<rect x="311.500" y="98.200" width="25" height="25.500" rx="7" fill="url(#gPur)" stroke="#7b3fb3" stroke-width="1"/>
<path d="M317.500 104.700v18.800M324 104.700v19M330.500 104.700v18M311.700 104.700h18.800l5.500-3M311.700 111.200h18.800l5.800-2.600M311.700 117.600h18.800l5.800-2.400M330.500 104.700c0 6 0 12 0 18M317.500 104.700l4-5.800M324 104.700l4.500-6.300M330.500 104.700l4.200-4.500M313.500 101.500h19" stroke="#7d42b5" stroke-width="0.900" fill="none"/>
<rect x="332" y="117.500" width="8.500" height="10" fill="#fff" stroke="#222" stroke-width="1"/>
<path d="M330.500 122.500h5v-2.700l3.700 2.700-3.700 2.700v-2.700" fill="#111" stroke="#111" stroke-width="0.800"/>
</g>
<!-- MODIFY: press pull -->
<g stroke="#1d3557" stroke-width="1.100" stroke-linejoin="round">
<path d="M370.500 104l6-6h6v24l-6 5.500h-6z" fill="#f2f3f5" stroke="#333"/>
<path d="M375.500 104l6-6h14.500l-6 6z" fill="#cfe2f3"/>
<path d="M390 104l6-6v23.500l-6 6z" fill="#6c93c6"/>
<rect x="375.500" y="104" width="14.500" height="23.500" fill="#9fc0e2"/>
</g>
<path d="M392 109.300h4.500v-2.600l4 4.500-4 4.500v-2.600h-4.500z" fill="#111"/>
<!-- ASSEMBLE: new component -->
<g stroke="#333" stroke-width="1" stroke-linejoin="round">
<path d="M441.500 114.500l3.500-3.500h12.500l-3.500 3.500z" fill="#eceef2"/>
<path d="M454 114.500l3.500-3.500v12.500l-3.500 3.500z" fill="#aeb3bf"/>
<rect x="441.500" y="114.500" width="12.500" height="12.500" fill="url(#gGrey)"/>
<rect x="429.500" y="114.500" width="12" height="12.500" fill="url(#gGrey)"/>
<g stroke="#1d3557"><path d="M429.500 102.500l3.500-3.500h12.500l-3.500 3.500z" fill="#cfe2f3"/><path d="M441.500 102.500l3.500-3.500v12l-3.500 3.500z" fill="#6c93c6"/><rect x="429.500" y="102.500" width="12" height="12" fill="#9fc0e2"/></g>
</g>
<path d="M432.300 98.300h3v4h4v3h-4v4h-3v-4h-4v-3h4z" fill="#fff" stroke="#222" stroke-width="1"/>
<!-- ASSEMBLE: joint -->
<g stroke="#333" stroke-width="0.900" stroke-linejoin="round">
<path d="M473.200 110l6.500-8.500v17l-6.500 7.500z" fill="url(#gGrey)"/>
<rect x="479.700" y="100.800" width="5" height="12" rx="2.500" fill="url(#gGrey)"/>
<ellipse cx="482.200" cy="102.300" rx="1.300" ry="1" fill="#fff"/>
<path d="M500.500 111l-7-6.500v16l7 6z" fill="url(#gGrey)"/>
<rect x="487.700" y="109" width="5" height="12" rx="2.500" fill="url(#gGrey)"/>
</g>
<path d="M482.200 113v6M490.400 105.500v5" stroke="#ff7a00" stroke-width="1" fill="none"/>
<!-- CONSTRUCT -->
<g stroke="#333" stroke-width="1" stroke-linejoin="round">
<path d="M543.500 105.500l7.300-6.200h10l-7.500 6.200z" fill="#f4f5f7"/>
<rect x="543.500" y="105.500" width="9.800" height="22" fill="url(#gGrey)"/>
<path d="M553.300 105.500l7.500-6.200v21.500l-7.500 6.700z" fill="#4f8a3c" stroke="#2e5a20"/>
<path d="M564.500 106.800l8.500-7.500v20.700l-8.500 7.500z" fill="#e89a5c" stroke="#8a3a0a"/>
</g>
<!-- INSPECT -->
<path d="M627.500 108.500h28M627.500 106v5M655.500 106v5" stroke="#333" stroke-width="1.200" fill="none"/>
<rect x="627.500" y="116.300" width="28" height="5.200" rx="0.800" fill="#f2c230" stroke="#b07d0a" stroke-width="1"/>
<path d="M630 116.500v2M633 116.500v2M636 116.500v2M639 116.500v2M642 116.500v2M645 116.500v2M648 116.500v2M651 116.500v2M654 116.500v2" stroke="#fff3c0" stroke-width="0.800"/>
<!-- INSERT -->
<g>
<rect x="696.800" y="98.800" width="28.500" height="28.500" rx="1" fill="url(#gSky)" stroke="#333" stroke-width="1.200"/>
<path d="M712 127v-9l6.500-5 6.500 6v8z" fill="#9aa2ae"/>
<path d="M697.400 126.700v-11.500l7-4.200 3 0.600 17.400 15.100z" fill="#626875"/>
<path d="M707.400 111.600l17.400 15.100" stroke="#e6e2d4" stroke-width="0.800"/>
<circle cx="717" cy="106" r="2.900" fill="#fff" stroke="#f6d873" stroke-width="1"/>
</g>
<!-- MAKE -->
<g>
<path d="M758.500 104.500l3.500-4h22.500l3.500 4v19.500c0 2-1 3.500-3 3.500h-23.500c-2 0-3-1.500-3-3.500z" fill="#f2f3f5" stroke="#444" stroke-width="1.100"/>
<path d="M758.500 104.500h29.500" stroke="#bbb" stroke-width="0.800"/>
<rect x="761.500" y="110.500" width="23.500" height="14" rx="1.500" fill="#5b5f68" stroke="#333" stroke-width="0.900"/>
<path d="M765 123l3.500-6.500h9.500l3.500 6.500z" fill="#f4f4f4"/>
<path d="M766 121h14M767 119h12M771 116.500l-1 6.500M776 116.500l1 6.500" stroke="#d0d0d0" stroke-width="0.500"/>
<path d="M770 111h4v5l-2 2.300-2-2.300z" fill="#3b78d8" stroke="#1f3f8a" stroke-width="0.600"/>
<rect x="782" y="106.700" width="2" height="2" fill="#0a8a1a"/>
</g>
<!-- ADD-INS -->
<g>
<rect x="824.500" y="100.500" width="23.500" height="21" rx="1" fill="url(#gGrey)" stroke="#333" stroke-width="1.100"/>
<rect x="825.500" y="101.500" width="21.500" height="3.500" fill="#8b8f99"/>
<path d="M824.500 106h23.500" stroke="#333" stroke-width="0.900"/>
<path d="M828.500 109.500l3 2.200-3 2.200M834 111.700h4" stroke="#222" stroke-width="1" fill="none"/>
<g transform="translate(847 120.500)"><g fill="#dfe8f8" stroke="#2f5fc4" stroke-width="1"><rect x="-1.300" y="-7.200" width="2.600" height="3" rx="0.500" transform="rotate(0)"/><rect x="-1.300" y="-7.200" width="2.600" height="3" rx="0.500" transform="rotate(45)"/><rect x="-1.300" y="-7.200" width="2.600" height="3" rx="0.500" transform="rotate(90)"/><rect x="-1.300" y="-7.200" width="2.600" height="3" rx="0.500" transform="rotate(135)"/><rect x="-1.300" y="-7.200" width="2.600" height="3" rx="0.500" transform="rotate(180)"/><rect x="-1.300" y="-7.200" width="2.600" height="3" rx="0.500" transform="rotate(225)"/><rect x="-1.300" y="-7.200" width="2.600" height="3" rx="0.500" transform="rotate(270)"/><rect x="-1.300" y="-7.200" width="2.600" height="3" rx="0.500" transform="rotate(315)"/><circle r="5" /></g><circle r="4.400" fill="#dfe8f8"/><circle r="2.200" fill="#fff" stroke="#2f5fc4" stroke-width="1"/></g>
</g>
<!-- SELECT -->
<rect x="896.800" y="99" width="20" height="13.700" fill="#f7f7f7" stroke="#5aa400" stroke-width="1.500"/>
<path d="M916.600 112.500v12.800l3-2.800 2.300 5 2-0.900-2.300-4.900h4.200z" fill="#fff" stroke="#333" stroke-width="0.900" stroke-linejoin="round"/>
<path d="M91.3 121.2h5.6l-2.800 3.400z" fill="#333"/><path d="M208.2 143.6h5.6l-2.800 3.400z" fill="#333"/><path d="M321 143.6h5.6l-2.800 3.400z" fill="#333"/><path d="M403.2 143.6h5.6l-2.800 3.400z" fill="#333"/><path d="M489.6 143.6h5.6l-2.800 3.400z" fill="#333"/><path d="M587 143.6h5.6l-2.800 3.400z" fill="#333"/><path d="M660 143.6h5.6l-2.800 3.400z" fill="#333"/><path d="M728 143.6h5.6l-2.800 3.400z" fill="#333"/><path d="M785.9 143.6h5.6l-2.800 3.400z" fill="#333"/><path d="M858 143.6h5.6l-2.800 3.400z" fill="#333"/><path d="M928.5 143.6h5.6l-2.800 3.400z" fill="#333"/>
</svg>
<span style="position:absolute;left:44.3px;top:26.3px;font-size:11.4px;line-height:1;font-weight:bold;color:#333;white-space:nowrap;transform:scaleX(0.9115);transform-origin:0 0">MODEL</span>
<span style="position:absolute;left:161px;top:46.5px;font-size:11.6px;line-height:1;font-weight:normal;color:#3a3a3a;white-space:nowrap;transform:scaleX(0.8292);transform-origin:0 0">SKETCH</span>
<span style="position:absolute;left:274.3px;top:46.5px;font-size:11.6px;line-height:1;font-weight:normal;color:#3a3a3a;white-space:nowrap;transform:scaleX(0.8598);transform-origin:0 0">CREATE</span>
<span style="position:absolute;left:357.2px;top:46.5px;font-size:11.6px;line-height:1;font-weight:normal;color:#3a3a3a;white-space:nowrap;transform:scaleX(0.8582);transform-origin:0 0">MODIFY</span>
<span style="position:absolute;left:428px;top:46.5px;font-size:11.6px;line-height:1;font-weight:normal;color:#3a3a3a;white-space:nowrap;transform:scaleX(0.8846);transform-origin:0 0">ASSEMBLE</span>
<span style="position:absolute;left:518.2px;top:46.5px;font-size:11.6px;line-height:1;font-weight:normal;color:#3a3a3a;white-space:nowrap;transform:scaleX(0.8450);transform-origin:0 0">CONSTRUCT</span>
<span style="position:absolute;left:612px;top:46.5px;font-size:11.6px;line-height:1;font-weight:normal;color:#3a3a3a;white-space:nowrap;transform:scaleX(0.8159);transform-origin:0 0">INSPECT</span>
<span style="position:absolute;left:685.9px;top:46.5px;font-size:11.6px;line-height:1;font-weight:normal;color:#3a3a3a;white-space:nowrap;transform:scaleX(0.8532);transform-origin:0 0">INSERT</span>
<span style="position:absolute;left:750.2px;top:46.5px;font-size:11.6px;line-height:1;font-weight:normal;color:#3a3a3a;white-space:nowrap;transform:scaleX(0.8886);transform-origin:0 0">MAKE</span>
<span style="position:absolute;left:808.9px;top:46.5px;font-size:11.6px;line-height:1;font-weight:normal;color:#3a3a3a;white-space:nowrap;transform:scaleX(0.8831);transform-origin:0 0">ADD-INS</span>
<span style="position:absolute;left:883px;top:46.5px;font-size:11.6px;line-height:1;font-weight:normal;color:#3a3a3a;white-space:nowrap;transform:scaleX(0.8557);transform-origin:0 0">SELECT</span>

</div>
<div id="browser">
<svg class="abs" style="left:0;top:0" width="298" height="22" viewBox="5 158.5 298 22">
<path d="M14.500 166.800v6.400l-4.500-3.200zM19.500 166.800v6.400l-4.500-3.200z" fill="#222"/>
<circle cx="287.300" cy="169.300" r="4.300" fill="#222"/><rect x="284.800" y="168.600" width="5" height="1.400" fill="#f0f0f0"/>
<path d="M298.500 164v11M300.500 166.500v6" stroke="#555" stroke-width="1" fill="none"/>
</svg>
<span style="position:absolute;left:24px;top:5.2px;font-size:11px;line-height:1;font-weight:normal;color:#555;white-space:nowrap;transform:scaleX(0.9148);transform-origin:0 0">BROWSER</span>

</div>
<div id="tree" class="abs" style="left:0;top:183px;width:320px;height:150px">
<!-- row backgrounds -->
<div class="row" style="left:40px;top:4.400px;width:148px"></div>
<div class="row" style="left:58px;top:28.500px;width:134px"></div>
<div class="row" style="left:58px;top:52.500px;width:110px"></div>
<div class="row" style="left:58px;top:76.500px;width:95px"></div>
<div class="row" style="left:58px;top:100.500px;width:103px"></div>
<div class="row" style="left:58px;top:124.500px;width:114.500px"></div>
<div class="abs" style="left:65px;top:6px;width:98px;height:16px;background:#8b8b8b"></div>
<svg class="abs" style="left:0;top:0" width="320" height="150" viewBox="0 183 320 150">
<defs>
<linearGradient id="gTri" x1="1" y1="0" x2="0" y2="1"><stop offset="0" stop-color="#2a2a2a"/><stop offset="1" stop-color="#8a8a8a"/></linearGradient>
<radialGradient id="gBulbY" cx="0.4" cy="0.35" r="0.7"><stop offset="0" stop-color="#fff9b0"/><stop offset="0.6" stop-color="#f7dc3a"/><stop offset="1" stop-color="#d9a800"/></radialGradient>
<radialGradient id="gBulbB" cx="0.4" cy="0.35" r="0.7"><stop offset="0" stop-color="#ffffff"/><stop offset="0.6" stop-color="#c4d8f6"/><stop offset="1" stop-color="#7fa3dc"/></radialGradient>
<linearGradient id="gFold" x1="0" y1="0" x2="0" y2="1"><stop offset="0" stop-color="#ffffff"/><stop offset="1" stop-color="#dcdfe6"/></linearGradient>
<g id="bulbY"><path d="M-2 3.500h4v4.200c0 0.800-0.600 1.300-1.300 1.300h-1.400c-0.700 0-1.300-0.500-1.300-1.300z" fill="#9a9a9a" stroke="#666" stroke-width="0.600"/><circle cx="0" cy="0" r="4.800" fill="url(#gBulbY)" stroke="#b8930a" stroke-width="0.800"/></g>
<g id="bulbB"><path d="M-2 3.500h4v4.200c0 0.800-0.600 1.300-1.300 1.300h-1.400c-0.700 0-1.300-0.500-1.300-1.300z" fill="#9a9a9a" stroke="#666" stroke-width="0.600"/><circle cx="0" cy="0" r="4.800" fill="url(#gBulbB)" stroke="#6f8fc8" stroke-width="0.800"/></g>
<g id="fold"><path d="M0.600 0.600h6.700v2.200h7.700v9.400H0.600z" fill="url(#gFold)" stroke="#333" stroke-width="1.100" stroke-linejoin="round"/><path d="M0.600 2.800h6.700" stroke="#333" stroke-width="0.900"/></g>
<g id="exp"><path d="M0.700 0.700l7.600 5.500-7.600 5.600z" fill="#fafafa" stroke="#333" stroke-width="1.300" stroke-linejoin="miter"/></g>
</defs>
<path d="M31.500 191.800v10.500h-10.300z" fill="url(#gTri)"/>
<use href="#bulbY" x="50.500" y="195.600"/>
<!-- cube in component box -->
<g stroke="#444" stroke-width="0.900" stroke-linejoin="round"><path d="M68.800 193l3.200-3.500h11.500l-3.200 3.500z" fill="#fbfbfc"/><path d="M80.300 193l3.200-3.500v11.500l-3.200 3.500z" fill="#c9ccd4"/><rect x="68.800" y="193" width="11.500" height="11.500" fill="#e9ebef"/></g>
<circle cx="173.500" cy="197.300" r="6" fill="#fff" stroke="#222" stroke-width="1.200"/><circle cx="173.500" cy="197.300" r="2.400" fill="#222"/>
<use href="#exp" x="40" y="215"/>
<use href="#exp" x="40" y="239"/>
<use href="#exp" x="40" y="263"/>
<use href="#exp" x="40" y="287"/>
<use href="#exp" x="40" y="311"/>
<!-- gear -->
<g transform="translate(68.8 221.1)"><g fill="#555"><rect x="-1.66" y="-7.90" width="3.32" height="3.95" rx="0.6" transform="rotate(0)"/><rect x="-1.66" y="-7.90" width="3.32" height="3.95" rx="0.6" transform="rotate(45)"/><rect x="-1.66" y="-7.90" width="3.32" height="3.95" rx="0.6" transform="rotate(90)"/><rect x="-1.66" y="-7.90" width="3.32" height="3.95" rx="0.6" transform="rotate(135)"/><rect x="-1.66" y="-7.90" width="3.32" height="3.95" rx="0.6" transform="rotate(180)"/><rect x="-1.66" y="-7.90" width="3.32" height="3.95" rx="0.6" transform="rotate(225)"/><rect x="-1.66" y="-7.90" width="3.32" height="3.95" rx="0.6" transform="rotate(270)"/><rect x="-1.66" y="-7.90" width="3.32" height="3.95" rx="0.6" transform="rotate(315)"/><circle r="5.6"/></g><circle r="2.600" fill="#f4f4f4"/></g>
<use href="#fold" x="61" y="239"/>
<use href="#bulbB" x="68.200" y="267.500"/>
<use href="#fold" x="86" y="263"/>
<use href="#bulbY" x="68.200" y="291.500"/>
<use href="#fold" x="86" y="287"/>
<use href="#bulbY" x="68.200" y="315.500"/>
<use href="#fold" x="86" y="311"/>
</svg>
<span style="position:absolute;left:98.4px;top:8.6px;font-size:11px;line-height:1;font-weight:bold;color:#fff;white-space:nowrap;transform:scaleX(1.0266);transform-origin:0 0">(Unsaved)</span>
<span style="position:absolute;left:90.6px;top:32.7px;font-size:11px;line-height:1;font-weight:normal;color:#2e2e2e;white-space:nowrap;transform:scaleX(0.9609);transform-origin:0 0">Document Settings</span>
<span style="position:absolute;left:90.6px;top:56.7px;font-size:11px;line-height:1;font-weight:normal;color:#2e2e2e;white-space:nowrap;transform:scaleX(0.9797);transform-origin:0 0">Named Views</span>
<span style="position:absolute;left:116.4px;top:80.7px;font-size:11px;line-height:1;font-weight:normal;color:#2e2e2e;white-space:nowrap;transform:scaleX(0.9235);transform-origin:0 0">Origin</span>
<span style="position:absolute;left:116.4px;top:104.7px;font-size:11px;line-height:1;font-weight:normal;color:#2e2e2e;white-space:nowrap;transform:scaleX(0.9542);transform-origin:0 0">Bodies</span>
<span style="position:absolute;left:116.4px;top:128.7px;font-size:11px;line-height:1;font-weight:normal;color:#2e2e2e;white-space:nowrap;transform:scaleX(0.9768);transform-origin:0 0">Sketches</span>

</div>
<div id="comments">
<svg class="abs" style="left:0;top:0" width="298" height="23" viewBox="5 649.5 298 23">
<circle cx="287.300" cy="661.500" r="4.300" fill="#222"/><path d="M284.800 661.500h5M287.300 659v5" stroke="#f0f0f0" stroke-width="1.400"/>
<path d="M298.500 656v11M300.500 658.500v6" stroke="#555" stroke-width="1" fill="none"/>
</svg>
<span style="position:absolute;left:24px;top:6.5px;font-size:11px;line-height:1;font-weight:normal;color:#555;white-space:nowrap;transform:scaleX(0.8789);transform-origin:0 0">COMMENTS</span>

</div>
<div id="navbar">
<div class="abs" style="left:0;top:0;width:33px;height:24px;background:#0e95d8"></div>
<svg class="abs" style="left:0;top:0" width="253" height="24" viewBox="556 650 253 24">
<!-- orbit -->
<g><path d="M563.500 661.800c2-2.800 10.500-2.800 11 0.600 0.400 2.800-6 3.800-9.500 3.600" fill="none" stroke="#222" stroke-width="1.200"/><path d="M566.300 657.800h2.800v11.800h-2.800z" fill="#fff" stroke="#222" stroke-width="0.900"/><path d="M567.700 653.700l3.300 4.600h-6.600z" fill="#fff" stroke="#222" stroke-width="0.900" stroke-linejoin="round"/><path d="M561.300 666l4.300-2.500v5z" fill="#111"/><path d="M565 666h5" stroke="#111" stroke-width="1.200"/></g>
<path d="M580.300 660.200h6l-3 3.700z" fill="#fff"/>
<!-- look at -->
<g stroke="#2a2a2a" stroke-width="1.200"><path d="M593.500 659l3.200-3.700 2.800 1.200 4.300-1.600v4.100z" fill="#a6aab3" stroke-width="0.900" stroke-linejoin="round"/><rect x="592.600" y="659.200" width="15" height="10.200" fill="#fafafa"/><rect x="595.300" y="662.700" width="9.400" height="4" fill="#b9bdc9" stroke-width="1"/></g>
<!-- hand -->
<path d="M621.300 663.200c-1.400-1.800-3.600-0.400-2.300 1.500l4.200 4.900h7.200c1.800-2 2.900-5 3-8.200 0-1.500-2-1.600-2.300 0l-0.300 1.500 0.200-5c0-1.600-2.100-1.700-2.300 0l-0.200 3.500-0.300-5.500c-0.100-1.600-2.200-1.600-2.300 0v5.500l-0.700-4.700c-0.300-1.600-2.400-1.300-2.200 0.300l0.900 8.200z" fill="#fff" stroke="#2a2a2a" stroke-width="1" stroke-linejoin="round"/>
<!-- zoom -->
<g><circle cx="648.600" cy="660.800" r="4.500" fill="#d3e3ea" stroke="#2a2a2a" stroke-width="1.200"/><path d="M652 664.300l4.200 4.200" stroke="#222" stroke-width="2.400" stroke-linecap="round"/><path d="M655.300 657.500h4.800M657.700 655.200v4.600M655.300 661h4.800" stroke="#222" stroke-width="0.900"/></g>
<!-- zoom window -->
<g><rect x="670.500" y="654.700" width="15.300" height="14.600" fill="none" stroke="#2a2a2a" stroke-width="0.900" stroke-dasharray="2.200 1.600"/><circle cx="676.800" cy="660.800" r="6.200" fill="#d9e7ee" stroke="#2a2a2a" stroke-width="1.300"/><path d="M681.300 665.300l3.900 3.700" stroke="#222" stroke-width="2.600" stroke-linecap="round"/></g>
<path d="M691 660.200h6l-3 3.700z" fill="#222"/>
<!-- display -->
<g><rect x="711.600" y="654.600" width="15" height="11.600" rx="1.200" fill="#fafafa" stroke="#2a2a2a" stroke-width="1.200"/><rect x="713.500" y="656.600" width="11.200" height="7.500" rx="0.800" fill="#a3c2ea" stroke="#1f3a78" stroke-width="1"/><path d="M716.500 666.300h5l1 3h-7z" fill="#fff" stroke="#777" stroke-width="0.700"/></g>
<path d="M729.100 660.200h6l-3 3.700z" fill="#222"/>
<!-- grid -->
<g><linearGradient id="gGridI" x1="0" y1="0" x2="0" y2="1"><stop offset="0" stop-color="#666"/><stop offset="1" stop-color="#444"/></linearGradient><linearGradient id="gGridC" x1="0" y1="0" x2="0" y2="1"><stop offset="0.300" stop-color="#fff"/><stop offset="1" stop-color="#b8bcc8"/></linearGradient><rect x="742.300" y="654.300" width="15.600" height="15.300" fill="url(#gGridC)"/><path d="M742.800 654.300v15.300M745.900 654.300v15.300M749 654.300v15.300M752.100 654.300v15.300M755.200 654.300v15.300M757.500 654.300v15.300M742.300 654.800h15.600M742.300 657.800h15.600M742.300 660.800h15.600M742.300 663.800h15.600M742.300 666.800h15.600M742.300 669.200h15.600" stroke="#555" stroke-width="1.100"/></g>
<path d="M760.100 660.200h6l-3 3.700z" fill="#222"/>
<!-- viewports -->
<g fill="#a8c6ec" stroke="#24478a" stroke-width="1.300"><rect x="773.700" y="655.700" width="6.500" height="5.500" rx="0.500"/><rect x="781.500" y="655.700" width="6.500" height="5.500" rx="0.500"/><rect x="773.700" y="662.200" width="6.500" height="5.500" rx="0.500"/><rect x="781.500" y="662.200" width="6.500" height="5.500" rx="0.500"/></g>
<path d="M791.100 660.200h6l-3 3.700z" fill="#222"/>
</svg>
</div>
<div id="bottomline"></div>
<div id="timeline">
<svg class="abs" style="left:0;top:0" width="1366" height="45" viewBox="0 680 1366 45">
<g fill="#484848">
<path d="M10.500 697.500h2v13.500h-2zM22.800 697.500v13.500l-9.800-6.750z"/>
<path d="M44.500 698v12.500l-9.500-6.250zM45.500 701h2.500v6.500h-2.500z"/>
<path d="M60.500 696.500v15.500l12.300-7.750z"/>
<path d="M88.500 698v12.500l9.500-6.250zM85 701h2.500v6.500h-2.500z"/>
<path d="M121 697.500h2v13.500h-2zM110.700 697.500v13.500l9.800-6.750z"/>
</g>
<!-- timeline sketch icon -->
<g><rect x="146.300" y="695.500" width="15.500" height="15" fill="#cfd6e6" stroke="#222" stroke-width="1.200"/><path d="M149 698v10h10" stroke="#333" stroke-width="0.900" fill="none"/><path d="M149.500 707.500l1-3 8-8 2 2-8 8z" fill="#f2c230" stroke="#7a5a00" stroke-width="0.600"/></g>
<!-- revolve icon -->
<g><path d="M170.500 702.500l3-2.500h8.500l3 2.500v5l-3 2.500h-8.500l-3-2.500z" fill="#a9c4e8" stroke="#2a4a7a" stroke-width="1"/><path d="M170.500 702.500l3 2.300h8.500l3-2.300" stroke="#2a4a7a" stroke-width="0.800" fill="none"/><path d="M172.500 699c2-4 9-4.500 11.500 0" stroke="#444" stroke-width="1" fill="none"/><path d="M171 696v3.800h3.500" stroke="#444" stroke-width="1" fill="none"/></g>
<path d="M154.500 714v5.500h24.500v-5.500" stroke="#c8c8c8" stroke-width="1.800" fill="none"/>
<path d="M184.200 689.300h11.800v3.200l-5 5.300v23h-1.800v-23l-5-5.300z" fill="#555"/>
<!-- gear -->
<g transform="translate(1345 704)"><g fill="#505050"><rect x="-1.68" y="-8.00" width="3.36" height="4.00" rx="0.6" transform="rotate(0)"/><rect x="-1.68" y="-8.00" width="3.36" height="4.00" rx="0.6" transform="rotate(45)"/><rect x="-1.68" y="-8.00" width="3.36" height="4.00" rx="0.6" transform="rotate(90)"/><rect x="-1.68" y="-8.00" width="3.36" height="4.00" rx="0.6" transform="rotate(135)"/><rect x="-1.68" y="-8.00" width="3.36" height="4.00" rx="0.6" transform="rotate(180)"/><rect x="-1.68" y="-8.00" width="3.36" height="4.00" rx="0.6" transform="rotate(225)"/><rect x="-1.68" y="-8.00" width="3.36" height="4.00" rx="0.6" transform="rotate(270)"/><rect x="-1.68" y="-8.00" width="3.36" height="4.00" rx="0.6" transform="rotate(315)"/><circle r="5.8"/></g><circle r="3.400" fill="none" stroke="#f4f4f4" stroke-width="1.300"/></g>
</svg>
</div>
</body>
</html>
